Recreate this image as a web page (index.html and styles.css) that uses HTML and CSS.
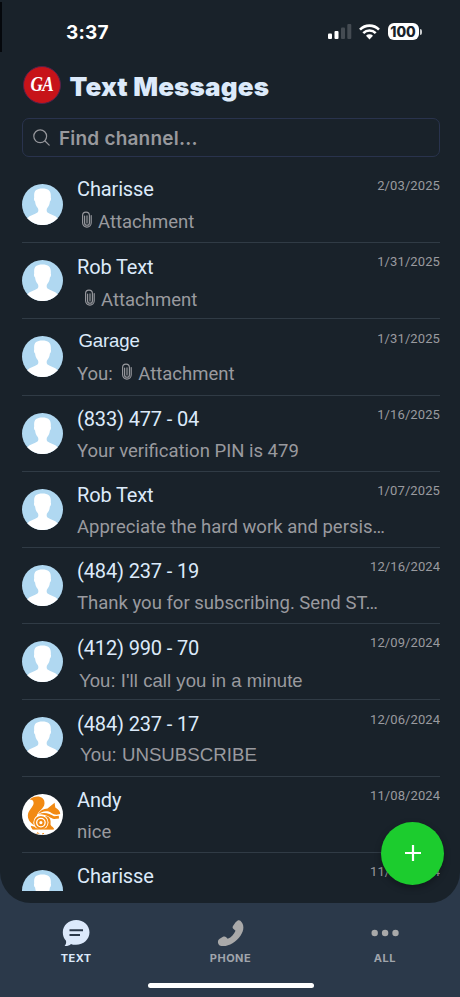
FILE: index.html
```html
<!DOCTYPE html>
<html lang="en">
<head>
<meta charset="utf-8">
<title>Text Messages</title>
<link rel="stylesheet" href="styles.css">
</head>
<body>
<svg class="defs" width="0" height="0" aria-hidden="true">
  <symbol id="person" viewBox="0 0 41 41">
    <circle cx="20.5" cy="20.5" r="20.5" fill="#b0d8f1"/>
    <path d="M5.200 34.200C8 31.300 13 30.300 15.500 28.500C16.700 27.500 16.500 25.300 15.700 24C14.100 22.400 13.300 20 13.100 17.600C11.900 16.500 11.800 14.500 12.200 13.400C11.600 7 14 4.600 20.400 4.600S29.300 7 28.800 13.400C29.200 14.500 29.100 16.500 27.900 17.600C27.700 20 26.900 22.400 25.300 24C24.500 25.300 24.300 27.500 25.500 28.500C28 30.300 33 31.300 35.800 34.200A20.500 20.500 0 0 1 5.200 34.200Z" fill="#fff"/>
  </symbol>
  <symbol id="clip" viewBox="0 0 12 18">
    <path d="M3.600 5V11.900A2.400 2.400 0 0 0 8.400 11.900V4.500A3.400 3.400 0 0 0 1.600 4.500V11.800A4.300 4.300 0 0 0 10.200 11.800V4.500M6 4.800V11.900" fill="none" stroke="currentColor" stroke-width="1.150" stroke-linecap="round"/>
  </symbol>
</svg>
<div class="screen">
  <main class="panel">
    <div class="status">
      <span class="time">3:37</span>
      <div class="status-icons">
        <svg class="signal" width="24" height="16" viewBox="0 0 24 16"><rect x="0" y="9.500" width="4" height="5.500" rx="1" fill="#fff"/><rect x="6.500" y="7" width="4" height="8" rx="1" fill="#fff"/><rect x="13" y="3.500" width="4" height="11.500" rx="1" fill="#444b52"/><rect x="19.300" y="0" width="4" height="15" rx="1" fill="#444b52"/></svg>
        <svg class="wifi" width="21" height="16" viewBox="0 0 21 16"><g fill="none" stroke="#fff" stroke-width="2.600"><path d="M1 5.600A13.400 13.400 0 0 1 20 5.600"/><path d="M4.300 9.100A8.800 8.800 0 0 1 16.700 9.100"/></g><path d="M7 11.800A5 5 0 0 1 14 11.800L10.500 15.500Z" fill="#fff"/></svg>
        <span class="battery">100</span><i class="battery-tip"></i>
      </div>
    </div>
    <header class="head"><div class="logo"><span>GA</span></div><h1>Text Messages</h1></header>
    <div class="search">
      <svg width="18" height="18" viewBox="0 0 18 18"><g fill="none" stroke="#96979c" stroke-width="1.200" stroke-linecap="round"><circle cx="7.200" cy="7.300" r="6.400"/><path d="M12 12L16.200 16.200"/></g></svg>
      <span>Find channel...</span>
    </div>
    <div class="list">
      <div class="row first"><svg class="avatar"><use href="#person"/></svg><div class="copy"><div class="name">Charisse</div><div class="sub in4"><svg class="clip"><use href="#clip"/></svg><span class="att">Attachment</span></div></div><time>2/03/2025</time></div>
      <div class="row second"><svg class="avatar"><use href="#person"/></svg><div class="copy"><div class="name">Rob Text</div><div class="sub in7"><svg class="clip"><use href="#clip"/></svg><span class="att">Attachment</span></div></div><time>1/31/2025</time></div>
      <div class="row third"><svg class="avatar"><use href="#person"/></svg><div class="copy"><div class="name arial">Garage</div><div class="sub"><span class="you">You:</span><svg class="clip"><use href="#clip"/></svg><span class="att">Attachment</span></div></div><time>1/31/2025</time></div>
      <div class="row"><svg class="avatar"><use href="#person"/></svg><div class="copy"><div class="name">(833) 477 - 04</div><div class="sub">Your verification PIN is 479</div></div><time>1/16/2025</time></div>
      <div class="row"><svg class="avatar"><use href="#person"/></svg><div class="copy"><div class="name">Rob Text</div><div class="sub">Appreciate the hard work and persis…</div></div><time>1/07/2025</time></div>
      <div class="row"><svg class="avatar"><use href="#person"/></svg><div class="copy"><div class="name">(484) 237 - 19</div><div class="sub">Thank you for subscribing. Send ST…</div></div><time>12/16/2024</time></div>
      <div class="row"><svg class="avatar"><use href="#person"/></svg><div class="copy"><div class="name">(412) 990 - 70</div><div class="sub arial call">You: I'll call you in a minute</div></div><time>12/09/2024</time></div>
      <div class="row"><svg class="avatar"><use href="#person"/></svg><div class="copy"><div class="name">(484) 237 - 17</div><div class="sub arial unsub">You: UNSUBSCRIBE</div></div><time>12/06/2024</time></div>
      <div class="row"><svg class="avatar" viewBox="0 0 41 41"><circle cx="20.500" cy="20.500" r="20.500" fill="#fff"/><g fill="#f28a13"><path d="M7.500 5.500C13 .8 23 1.500 22.500 9.500C22.200 15 15.800 17 14.600 22.200C13.900 25.200 14.600 27.500 13 31.500C8.500 29.500 5 25 6 20C7 15.500 12.500 12 11.500 8C11 6 9.200 5.400 7.500 5.500Z"/><path d="M25.500 14.600L32.600 8.800L33.300 13.500C36.500 15.500 38.300 17.500 38.200 20L34.500 20.800C30.500 20.600 29 18 25.500 17.300C22 16.700 18.500 18.400 15.900 20.300C18 16.500 21.500 14.800 25.500 14.600Z"/><path d="M17 20.300C22 17.500 27.800 19.800 32 22.200L36.800 21.700L37 24.500L32.200 25C28.600 24.600 26.200 20.700 17 20.300Z"/><path d="M23 21.700C28 22.500 29.200 25.700 28.500 30.500C29.500 33.200 31.500 32.500 32 35.200H10.500C9.300 34.200 9 33 8.800 31.800L14 33C20 35.500 26.500 31 23 21.700Z"/></g><circle cx="18.900" cy="28.400" r="7.600" fill="#fff"/><circle cx="18.900" cy="28.600" r="5.800" fill="none" stroke="#f28a13" stroke-width="1.800"/><circle cx="18.900" cy="28.600" r="2.600" fill="#fff" stroke="#f28a13" stroke-width="2"/><path d="M10.500 34.800H31.500" stroke="#f28a13" stroke-width="1.200"/><path d="M14.500 39.800L16 38.600L17 39.800M20 40L22 39.400" fill="none" stroke="#f28a13"/></svg><div class="copy"><div class="name">Andy</div><div class="sub">nice</div></div><time>11/08/2024</time></div>
      <div class="row"><svg class="avatar"><use href="#person"/></svg><div class="copy"><div class="name">Charisse</div></div><time>11/06/2024</time></div>
    </div>
  </main>
  <nav class="tabs">
    <div class="tab active"><svg width="28" height="28" viewBox="0 0 28 28"><path d="M14.200 1C21.500 1 27.500 6.300 27.500 13.300S21.500 25.800 14 25.800C12 25.800 10.500 25.500 9 24.900C7.500 26.500 4.800 27.300 2.600 27C4 25.500 4.400 23.700 4 21.800C1.900 19.500 .8 16.700 .8 13.300C.8 6.300 6.900 1 14.200 1Z" fill="#dce9fb"/><path d="M7.500 11.300H21M7.500 16H18" stroke="#2b394a" stroke-width="2.100"/></svg><span>TEXT</span></div>
    <div class="tab phone"><svg width="28" height="28" viewBox="0 0 28 28"><path d="M20.700 1.600C21.500 1 22.600 1.100 23.400 1.800C27.300 5.300 27.500 11.300 23.500 16.700C18.500 23.500 11 28 4.300 26.900C1.800 26.500 .5 24.500 1 21.900C1.200 20.900 1.800 20.200 2.700 19.700L6 17.800C7.200 17.100 8.300 17.300 9.200 18.300L10.700 19.800C14.500 18.200 17 15.400 18.500 11.700L16.300 9.700C15.500 8.900 15.400 7.800 16 6.900L18.600 3.300Z" fill="#a9a9a9"/></svg><span>PHONE</span></div>
    <div class="tab"><svg width="28" height="28" viewBox="0 0 28 28" fill="#a9a9a9"><circle cx="3.700" cy="14" r="3.200"/><circle cx="14.100" cy="14" r="3.200"/><circle cx="24.500" cy="14" r="3.200"/></svg><span>ALL</span></div>
  </nav>
  <div class="home"></div>
  <div class="edge"></div>
  <div class="fab"><svg width="18" height="18" viewBox="0 0 18 18"><path d="M9 1V17M1 9H17" stroke="#fff" stroke-width="2.200"/></svg></div>
</div>
</body>
</html>
```
FILE: styles.css
```css
* { box-sizing: border-box; }
body { margin: 0; background: #2b394a; }
.defs { position: absolute; }
.screen { position: relative; width: 460px; height: 997px; overflow: hidden; background: #2b394a; }
.panel { height: 902.5px; padding: 0 20px 0 22px; background: #19222a; border-radius: 0 0 31px 31px; overflow: hidden; }
.edge { position: absolute; left: 0; top: 2px; width: 1.5px; height: 50px; background: #05080c; }
.status { height: 64px; display: flex; justify-content: space-between; align-items: flex-start; padding: 20px 18.500px 0 44px; }
.time { margin-top: 1px; font: 700 19px/24px Inter, sans-serif; color: #fff; letter-spacing: .2px; }
.status-icons { display: flex; align-items: center; padding-top: 3px; }
.wifi { margin: 0 8px 0 7px; }
.battery { width: 31px; height: 17px; border-radius: 6px; background: #fff; color: #19222a; font: 800 14px/17px Inter, sans-serif; text-align: center; letter-spacing: -.1px; }
.battery-tip { width: 2px; height: 6px; margin-left: 1px; border-radius: 0 3px 3px 0; background: #c9ccce; }
.head { height: 54px; display: flex; align-items: flex-start; gap: 8.500px; padding: 2px 0 0 1px; }
.logo { width: 38px; height: 38px; border-radius: 50%; background: #c71319; border: 1px solid #53224a; color: #fff; font: italic 700 21px/35px "Liberation Serif", serif; display: flex; justify-content: center; }
.logo span { transform: scaleX(.82); letter-spacing: -.7px; }
h1 { margin: 5px 0 0; font: 900 26px/32px Inter, sans-serif; color: #dceafa; letter-spacing: .17px; }
.search { height: 39px; display: flex; align-items: center; border: 1px solid #29334d; border-radius: 7px; padding-left: 10px; gap: 8px; color: #98999d; font: 600 19px/24px Inter, sans-serif; letter-spacing: .2px; }
.search span { padding-top: 2px; }
.list { height: 734px; overflow: hidden; padding-top: 10px; }
.row { height: 76.200px; display: flex; border-bottom: 1px solid #303b45; font-family: Roboto, sans-serif; }
.avatar { width: 41px; height: 41px; margin-top: 17px; flex: none; }
.copy { flex: 1; padding: 11.500px 0 0 14px; min-width: 0; white-space: nowrap; }
.name { height: 24px; font-size: 20px; line-height: 24px; color: #dceafa; letter-spacing: -.14px; }
.sub { height: 24px; margin-top: 7.500px; display: flex; font-size: 18.500px; line-height: 24px; color: #999a9f; }
.first .copy { padding-top: 10px; }
.first .sub { margin-top: 9px; }
.second .sub { margin-top: 9px; }
.third .copy { padding-top: 9.500px; }
.third .sub { margin-top: 9.500px; }
.arial { font-family: "Liberation Sans", Arial, sans-serif; }
.name.arial { padding-left: 1.500px; font-size: 18.600px; letter-spacing: -.15px; }
.sub.call { padding-left: 2px; margin-top: 9px; letter-spacing: .06px; }
.sub.unsub { padding-left: 3px; margin-top: 7.500px; font-size: 18.700px; }
.in4 { padding-left: 4px; }
.in7 { padding-left: 7px; }
.clip { width: 12px; height: 18px; margin: 1px 5px 0 0; }
.you { margin-right: 8.500px; }
time { width: 70px; margin-left: -70px; padding-top: 10.300px; text-align: right; font-size: 13px; line-height: 18px; color: #999a9f; letter-spacing: .1px; }
.tabs { display: flex; height: 80px; padding-top: 16.500px; margin: 0 -2px 0 -1px; }
.tab { flex: 1; display: flex; flex-direction: column; align-items: center; gap: 3px; color: #a0a5ac; font: 700 11px/16px Inter, sans-serif; letter-spacing: .5px; }
.tab.active { color: #dce9fb; }
.phone svg { margin-left: 2px; }
.home { width: 166px; height: 5px; margin: .5px auto 0 148px; border-radius: 3px; background: #fff; }
.fab { position: absolute; left: 381px; top: 821.500px; width: 63px; height: 63px; border-radius: 50%; background: #1ccc2e; display: flex; align-items: center; justify-content: center; box-shadow: 0 3px 7px rgba(0,0,0,.3); }
```
